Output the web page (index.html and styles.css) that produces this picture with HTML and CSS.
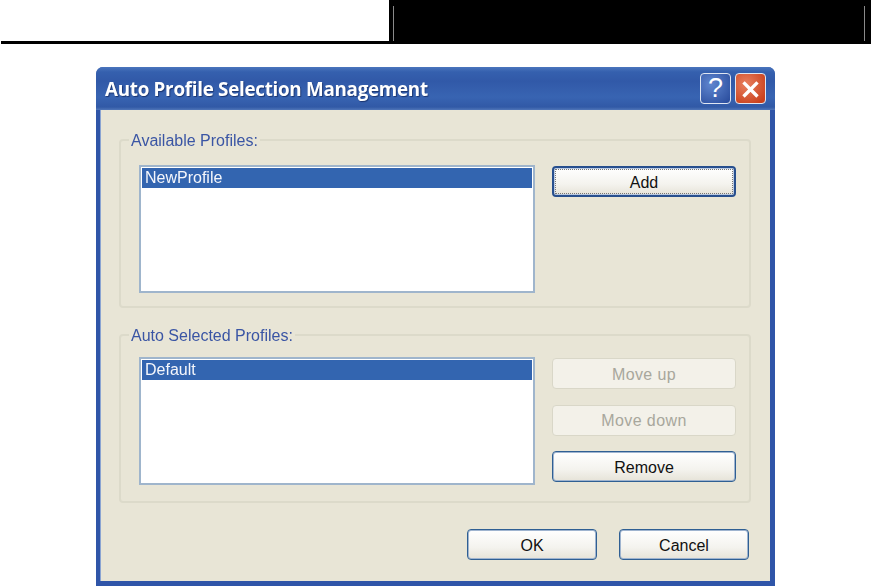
FILE: index.html
```html
<!DOCTYPE html>
<html lang="en">
<head>
<meta charset="utf-8">
<title>Auto Profile Selection Management</title>
<link rel="stylesheet" href="styles.css">
</head>
<body>
<header class="page-head">
  <div class="head-left"></div>
  <div class="head-right"><div class="head-inner"></div></div>
</header>
<main class="dialog">
  <div class="titlebar">
    <span class="title">Auto Profile Selection Management</span>
    <div class="caption-btns">
      <button class="cap cap-help" type="button">?</button>
      <button class="cap cap-close" type="button" aria-label="Close">
        <svg viewBox="0 0 31 31" width="31" height="31"><path d="M8 9 L23 24 M23 9 L8 24" stroke="#fff" stroke-width="3.6" fill="none"/></svg>
      </button>
    </div>
  </div>
  <div class="client">
    <fieldset class="group group-first">
      <legend>Available Profiles:</legend>
      <div class="group-row">
        <div class="list"><div class="item">NewProfile</div></div>
        <div class="actions"><button class="btn btn-default" type="button"><span class="focus">Add</span></button></div>
      </div>
    </fieldset>
    <fieldset class="group group-second">
      <legend>Auto Selected Profiles:</legend>
      <div class="group-row">
        <div class="list"><div class="item">Default</div></div>
        <div class="actions actions-offset">
          <button class="btn" type="button" disabled>Move up</button>
          <button class="btn" type="button" disabled>Move down</button>
          <button class="btn" type="button">Remove</button>
        </div>
      </div>
    </fieldset>
    <div class="footer">
      <button class="btn btn-wide" type="button">OK</button>
      <button class="btn btn-wide" type="button">Cancel</button>
    </div>
  </div>
</main>
</body>
</html>
```
FILE: styles.css
```css
* { box-sizing: border-box; }
html, body { margin: 0; padding: 0; background: #fff; }
body { width: 871px; height: 587px; overflow: hidden; font-family: "Liberation Sans", Arial, sans-serif; }

.page-head { display: flex; height: 44px; }
.head-left { width: 388px; margin-left: 1px; border-bottom: 3px solid #000; }
.head-right { flex: 1; background: #000; padding: 6px 0 3px 4px; }
.head-inner { width: 472px; height: 35px; border-left: 1px solid #8a8a8a; border-right: 1px solid #8a8a8a; }

.dialog {
  width: 679px; height: 519px; margin: 23px 0 0 96px;
  display: flex; flex-direction: column;
  background: #2f55a8;
  border-radius: 7px 7px 0 0;
  overflow: hidden;
}
.titlebar {
  height: 43px; flex: none;
  display: flex; align-items: center; justify-content: space-between;
  padding: 0 9px 0 9px;
  background: linear-gradient(180deg, #4a75bd 0, #3560ae 5px, #3159a8 14px, #3864b2 30px, #3159a6 40px, #5076b8 43px);
}
.title {
  color: #fff; font-family: "Open Sans", "Liberation Sans", sans-serif; font-weight: 700; font-size: 20px;
  letter-spacing: -.3px; transform: scaleX(.94); transform-origin: left center;
  text-shadow: 1px 1px 1px #1b3570; white-space: nowrap; filter: blur(.35px);
}
.caption-btns { display: flex; gap: 4px; }
.cap {
  width: 31px; height: 31px; padding: 0; display: flex; align-items: center; justify-content: center;
  border: 1px solid #dfe6f2; border-radius: 4px;
}
.cap-help {
  color: #fff; font: 400 27px "Liberation Sans", sans-serif;
  background: radial-gradient(circle at 35% 35%, #5f86cf, #2c4f9f 90%);
}
.cap-close { background: radial-gradient(circle at 35% 35%, #e9805f, #c9401c 85%); }

.client {
  flex: 1; margin: 0 5px 5px 4px; background: #e8e5d6;
  padding: 21px 19px 0;
  box-shadow: inset 1px 0 #8aa4d2;
}
.group {
  margin: 0; min-width: 0;
  border: 2px solid #dcdaca; border-radius: 4px;
  padding: 16px 13px 13px 18px;
}
.group legend {
  margin-left: -10px; padding: 0 2px; height: 18px; line-height: 20px;
  color: #3a55a4; font-size: 16px; filter: blur(.35px);
}
.group-second { margin-top: 18px; padding-top: 13px; padding-bottom: 16px; }
.group-row { display: flex; gap: 17px; align-items: flex-start; }
.list {
  width: 396px; height: 128px; flex: none;
  background: #fff; border: 2px solid #9fb5cc; padding: 1px;
}
.item {
  height: 20px; line-height: 20px; padding-left: 3px;
  background: #3365b0; color: #f4f6fb; font-size: 16px; filter: blur(.35px);
}
.actions { width: 184px; padding-top: 1px; display: flex; flex-direction: column; gap: 15.5px; }
.btn {
  display: block; width: 184px; height: 31px; padding: 2px 0 0;
  font: 16px/1 "Liberation Sans", sans-serif; color: #111;
  background: linear-gradient(180deg, #fff 0, #f4f3ee 60%, #e6e3d8 100%);
  border: 1px solid #2f5f93; border-radius: 4px;
  box-shadow: inset 0 0 0 1px #9fb4cf;
}
.btn:disabled {
  color: #a8a79c; background: #f3f1e9; border-color: #d9d7c8; box-shadow: none;
  letter-spacing: .4px;
}
.btn-default { padding: 0; border: 2px solid #274f8e; box-shadow: inset 0 0 0 1px #b9c9e2; }
.focus {
  display: flex; align-items: center; justify-content: center;
  margin: 1px; height: calc(100% - 2px); padding-top: 2px; border: 1px dotted #777;
}
.footer { display: flex; justify-content: flex-end; gap: 22px; margin-top: 26px; padding-right: 2px; }
.btn-wide { width: 130px; }
```
